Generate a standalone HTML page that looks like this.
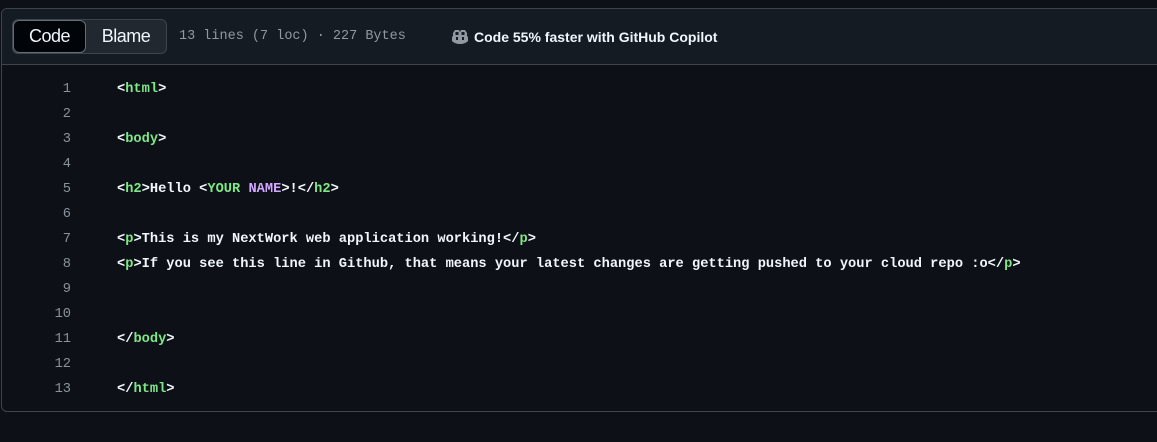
<!DOCTYPE html>
<html><head><meta charset="utf-8"><style>
*{margin:0;padding:0;box-sizing:border-box}
body{width:1157px;height:442px;background:#0d1117;overflow:hidden;font-family:"Liberation Sans",sans-serif;position:relative}
.box{position:absolute;left:1px;top:8px;width:1170px;height:404px;border:1px solid #3d444d;border-radius:6px;background:#0d1117;overflow:hidden}
.hdr{height:56px;background:#151b23;border-bottom:1px solid #3d444d;position:relative}
.seg{position:absolute;left:10px;top:10px;height:35px;width:155px;border:1px solid #3d444d;border-radius:6px;background:#212830;display:flex}
.seg .a{width:73px;height:33px;background:#010409;border:1px solid #656c76;border-radius:6px;color:#f0f6fc;font-size:18px;display:flex;align-items:center;justify-content:center;letter-spacing:-0.5px}
.seg .b{flex:1;color:#f0f6fc;font-size:18px;display:flex;align-items:center;justify-content:center;letter-spacing:-0.5px}
.meta{position:absolute;left:177px;top:20px;font-family:"Liberation Mono",monospace;font-size:13.5px;color:#9198a1}
.cop{position:absolute;left:449px;top:19px;display:flex;align-items:center;color:#f0f6fc;font-weight:bold;font-size:14px}
.cop svg{margin-right:5px}
.code{position:absolute;left:0;top:69px;font-family:"Liberation Mono",monospace;font-size:13.7px;font-weight:bold;color:#f0f6fc}
.ln{position:absolute;width:71px;text-align:right;color:#8b929b;font-weight:normal}
.tx{position:absolute;left:117px;white-space:pre}
.g{color:#7ee787}.p{color:#d2a8ff}
</style></head><body>
<div class="box">
<div class="hdr">
<div class="seg"><div class="a">Code</div><div class="b">Blame</div></div>
<div class="meta">13 lines (7 loc) · 227 Bytes</div>
<div class="cop"><svg width="18" height="17" viewBox="0 0 18 17"><path d="M4 2h4l1 2 1-2h4l2 3v3l1 1v4c-2 2-5 3-8 3s-6-1-8-3V9l1-1V5z" fill="#9198a1"/><rect x="5" y="9" width="2" height="3" fill="#151b23"/><rect x="11" y="9" width="2" height="3" fill="#151b23"/><path d="M4.5 4h3v3h-3zM10.5 4h3v3h-3z" fill="#151b23"/></svg>Code 55% faster with GitHub Copilot</div>
</div>
</div>
<div class="code">
<div class="ln" style="top:13px">1</div><div class="tx" style="top:13px">&lt;<span class="g">html</span>&gt;</div>
<div class="ln" style="top:38px">2</div>
<div class="ln" style="top:63px">3</div><div class="tx" style="top:63px">&lt;<span class="g">body</span>&gt;</div>
<div class="ln" style="top:88px">4</div>
<div class="ln" style="top:113px">5</div><div class="tx" style="top:113px">&lt;<span class="g">h2</span>&gt;Hello &lt;<span class="g">YOUR</span> <span class="p">NAME</span>&gt;!&lt;/<span class="g">h2</span>&gt;</div>
<div class="ln" style="top:138px">6</div>
<div class="ln" style="top:163px">7</div><div class="tx" style="top:163px">&lt;<span class="g">p</span>&gt;This is my NextWork web application working!&lt;/<span class="g">p</span>&gt;</div>
<div class="ln" style="top:188px">8</div><div class="tx" style="top:188px">&lt;<span class="g">p</span>&gt;If you see this line in Github, that means your latest changes are getting pushed to your cloud repo :o&lt;/<span class="g">p</span>&gt;</div>
<div class="ln" style="top:213px">9</div>
<div class="ln" style="top:238px">10</div>
<div class="ln" style="top:263px">11</div><div class="tx" style="top:263px">&lt;/<span class="g">body</span>&gt;</div>
<div class="ln" style="top:288px">12</div>
<div class="ln" style="top:313px">13</div><div class="tx" style="top:313px">&lt;/<span class="g">html</span>&gt;</div>
</div>
</body></html>
